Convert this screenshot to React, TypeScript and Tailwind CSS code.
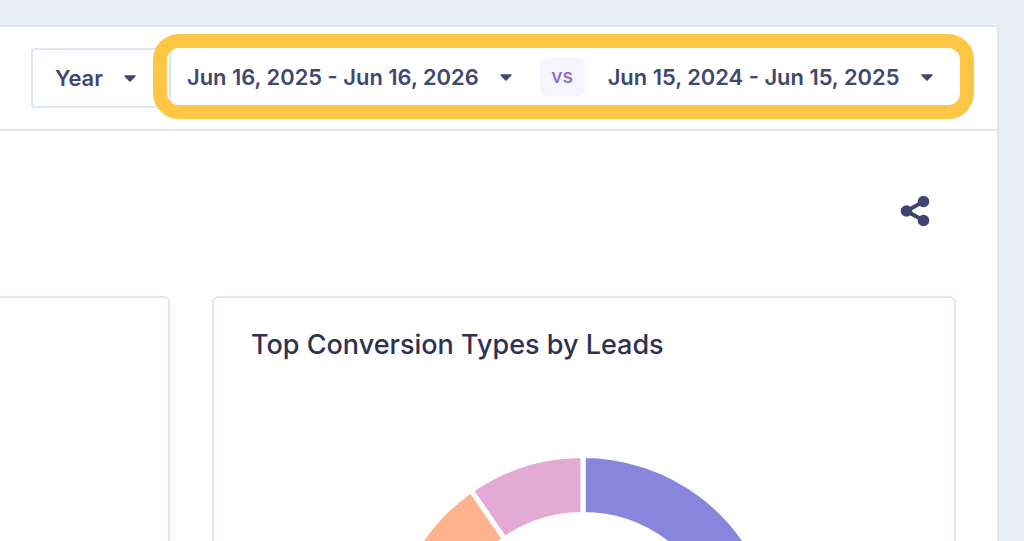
const inter = "font-['Inter',sans-serif]";

function Caret() {
  return (
    <svg width="12" height="7" viewBox="0 0 12 7" className="block shrink-0">
      <path d="M1 0.3h10c.6 0 .9.7.5 1.1L6.6 6.4c-.3.3-.9.3-1.2 0L.5 1.4C.1 1 .4.3 1 .3z" fill="#414770" />
    </svg>
  );
}

function ShareIcon() {
  return (
    <svg width="30" height="32" viewBox="0 0 30 32" className="block">
      <path d="M6.5 16 L23.5 6.5 M6.5 16 L23.5 25.5" stroke="#3f4570" strokeWidth="4" fill="none" />
      <circle cx="6.5" cy="16" r="5.8" fill="#3f4570" />
      <circle cx="23.5" cy="6.5" r="5.8" fill="#3f4570" />
      <circle cx="23.5" cy="25.5" r="5.8" fill="#3f4570" />
    </svg>
  );
}

// annulus sector, angles in degrees clockwise from 12 o'clock
function sector(a0: number, a1: number, cx = 200, cy = 200, R = 196.5, r = 137.5) {
  const pt = (rad: number, a: number) => {
    const t = (a * Math.PI) / 180;
    return `${(cx + rad * Math.sin(t)).toFixed(2)} ${(cy - rad * Math.cos(t)).toFixed(2)}`;
  };
  const large = a1 - a0 > 180 ? 1 : 0;
  return `M${pt(R, a0)} A${R} ${R} 0 ${large} 1 ${pt(R, a1)} L${pt(r, a1)} A${r} ${r} 0 ${large} 0 ${pt(r, a0)} Z`;
}

const segments = [
  { from: 0, to: 150, color: '#8886dc' },
  { from: 150, to: 325.3, color: '#ffb38c' },
  { from: 325.3, to: 360, color: '#e2aad4' },
];

function Donut() {
  return (
    <svg width="400" height="400" viewBox="0 0 400 400" className="block">
      {segments.map((s) => (
        <path key={s.from} d={sector(s.from, s.to)} fill={s.color} stroke="#ffffff" strokeWidth="5" />
      ))}
    </svg>
  );
}

export default function App() {
  return (
    <div className={`h-[541px] w-[1024px] overflow-hidden bg-[#e9f0f8] pt-[25px] pr-[25px] ${inter}`}>
      <div className="h-[600px] rounded-tr-[3px] border-t-2 border-r-2 border-[#dde6f1] bg-white">
        <div className="flex h-[104px] items-center border-b-2 border-[#dde6f1] pb-[4px] pl-[31px] text-[21.9px] font-semibold text-[#414770]">
          <div className="mt-[4px] flex h-[60px] w-[140px] items-center gap-[21px] rounded-[4px] border-2 border-[#e0e5f3] pl-[22px]">
            <span>Year</span>
            <Caret />
          </div>
          <div className="relative -ml-[4px] flex h-[57px] w-[793px] items-center pt-[2px] pl-[20px]">
            <div className="absolute -inset-[14px] rounded-[26px] border-[14px] border-[#fec645]" />
            <span className="whitespace-nowrap">Jun 16, 2025 - Jun 16, 2026</span>
            <span className="ml-[21px]"><Caret /></span>
            <span className="ml-[28px] flex h-[38px] w-[45px] items-center justify-center rounded-[6px] bg-[#f6f4fe] text-[19.5px] font-medium text-[#8b68c4]">vs</span>
            <span className="ml-[23px] whitespace-nowrap">Jun 15, 2024 - Jun 15, 2025</span>
            <span className="ml-[22px]"><Caret /></span>
          </div>
        </div>
        <div className="flex h-[165px] items-start justify-end pt-[64px] pr-[67px]">
          <ShareIcon />
        </div>
        <div className="flex gap-[42px] pr-[41px]">
          <div className="h-[300px] w-[170px] rounded-tr-[6px] border-t-2 border-r-2 border-[#dde6f1]" />
          <div className="h-[300px] flex-1 rounded-t-[6px] border-x-2 border-t-2 border-[#dde6f1] pt-[28px]">
            <h2 className="pl-[37px] text-[27px] leading-[38px] font-medium text-[#2e3152]">Top Conversion Types by Leads</h2>
            <div className="mt-[88px] ml-[169px]">
              <Donut />
            </div>
          </div>
        </div>
      </div>
    </div>
  );
}
